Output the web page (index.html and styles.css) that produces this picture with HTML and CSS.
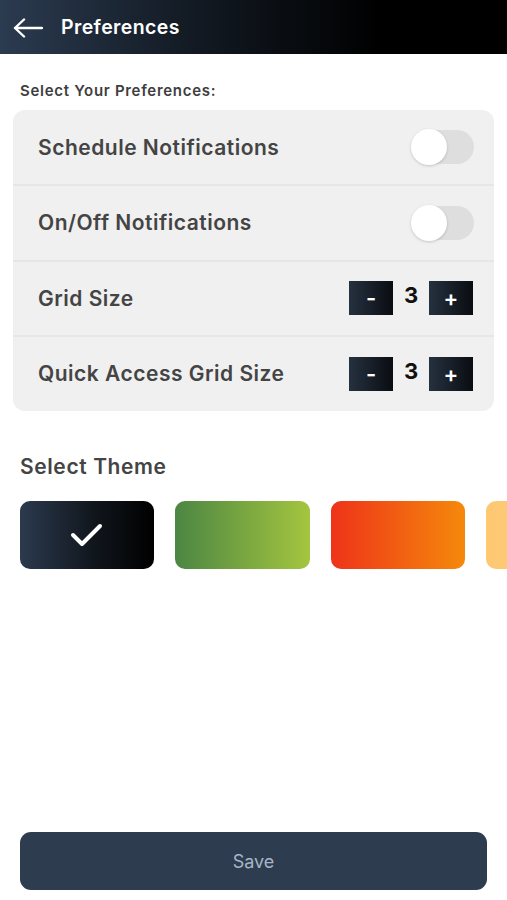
FILE: index.html
```html
<!DOCTYPE html>
<html>
<head>
<meta charset="utf-8">
<link rel="stylesheet" href="styles.css">
</head>
<body>
<div class="app">
  <header class="topbar">
    <svg class="back" width="30" height="20" viewBox="0 0 30 20"><path d="M29 10H2M11 1.5L2 10l9 8.5" fill="none" stroke="#fff" stroke-width="2.4" stroke-linecap="round" stroke-linejoin="round"/></svg>
    <h1 class="title">Preferences</h1>
  </header>
  <main class="content">
    <p class="label">Select Your Preferences:</p>
    <section class="card">
      <div class="row"><span class="row-text">Schedule Notifications</span><span class="toggle"><span class="thumb"></span></span></div>
      <div class="row"><span class="row-text">On/Off Notifications</span><span class="toggle"><span class="thumb"></span></span></div>
      <div class="row"><span class="row-text">Grid Size</span><span class="stepper"><span class="step-btn">-</span><span class="num">3</span><span class="step-btn">+</span></span></div>
      <div class="row"><span class="row-text">Quick Access Grid Size</span><span class="stepper"><span class="step-btn">-</span><span class="num">3</span><span class="step-btn">+</span></span></div>
    </section>
    <h2 class="theme-title">Select Theme</h2>
    <div class="themes">
      <div class="swatch dark"><svg width="36" height="28" viewBox="0 0 36 28"><path d="M4 14l9 9L31 5" fill="none" stroke="#fff" stroke-width="4" stroke-linecap="round" stroke-linejoin="round"/></svg></div>
      <div class="swatch green"></div>
      <div class="swatch orange"></div>
      <div class="swatch yellow"></div>
    </div>
  </main>
  <div class="footer">
    <button class="save">Save</button>
  </div>
</div>
</body>
</html>
```

FILE: styles.css
```css
* { box-sizing: border-box; }
html, body { margin: 0; padding: 0; }
body {
  width: 507px;
  height: 900px;
  overflow: hidden;
  background: #fff;
  font-family: "Inter", "Noto Sans", sans-serif;
}
.app {
  height: 900px;
  display: flex;
  flex-direction: column;
}
.topbar {
  height: 54px;
  flex: none;
  display: flex;
  align-items: center;
  padding-left: 13px;
  background: linear-gradient(90deg, #2b3b50 0%, #141c26 35%, #000 75%, #000 100%);
}
.back { display: block; margin-top: 1px; }
.title {
  margin: 0 0 0 18px;
  color: #fff;
  font-size: 19.5px;
  font-weight: 600;
  letter-spacing: 0.4px;
}
.content {
  flex: 1;
  padding: 0 13px;
  overflow: hidden;
}
.label {
  margin: 27px 0 0 7px;
  font-size: 15px;
  font-weight: 600;
  color: #3e3e3e;
  letter-spacing: 0.7px;
  line-height: 20px;
  height: 20px;
}
.card {
  margin-top: 9px;
  background: #f0f0f0;
  border-radius: 12px;
  overflow: hidden;
}
.row {
  height: 75.5px;
  display: flex;
  align-items: center;
  justify-content: space-between;
  padding: 0 20px 0 25px;
  border-top: 2px solid #e6e6e6;
}
.row:first-child { border-top: none; height: 74px; }
.row-text {
  font-size: 21px;
  font-weight: 600;
  color: #444;
  letter-spacing: 0.5px;
}
.toggle {
  width: 62px;
  height: 34px;
  border-radius: 17px;
  background: #dedede;
  position: relative;
}
.thumb {
  position: absolute;
  left: -1px;
  top: -1px;
  width: 36px;
  height: 36px;
  border-radius: 50%;
  background: #fff;
  box-shadow: 0 1px 3px rgba(0,0,0,0.18);
}
.stepper {
  display: flex;
  align-items: center;
  margin-right: 1px;
}
.step-btn {
  width: 44px;
  height: 34px;
  display: flex;
  align-items: center;
  justify-content: center;
  color: #fff;
  font-size: 22px;
  font-weight: 600;
  background: linear-gradient(90deg, #25313f 0%, #0a0d11 100%);
  line-height: 1;
}
.num {
  width: 36px;
  text-align: center;
  font-size: 22px;
  font-weight: 700;
  color: #111;
  margin-top: -6px;
}
.theme-title {
  margin: 43px 0 0 7px;
  font-size: 21px;
  font-weight: 600;
  color: #444;
  letter-spacing: 0.6px;
  line-height: 26px;
}
.themes {
  display: flex;
  gap: 21px;
  margin-top: 21px;
  margin-left: 7px;
}
.swatch {
  flex: none;
  width: 134.3px;
  height: 68px;
  border-radius: 10px;
  display: flex;
  align-items: center;
  justify-content: center;
}
.dark { background: linear-gradient(90deg, #2b3a4e 0%, #11161d 55%, #000 100%); }
.green { background: linear-gradient(90deg, #4c8643 0%, #a4c53f 100%); }
.orange { background: linear-gradient(90deg, #ee3319 0%, #f5890b 100%); }
.yellow { background: linear-gradient(90deg, #fec873 0%, #ffd07a 100%); }
.footer {
  flex: none;
  padding: 0 20px 10px;
}
.save {
  width: 100%;
  height: 58px;
  border: none;
  border-radius: 11px;
  background: #2d3c4f;
  color: #a9b5c4;
  font-family: "Inter", "Noto Sans", sans-serif;
  font-size: 18px;
  font-weight: 400;
}
```
